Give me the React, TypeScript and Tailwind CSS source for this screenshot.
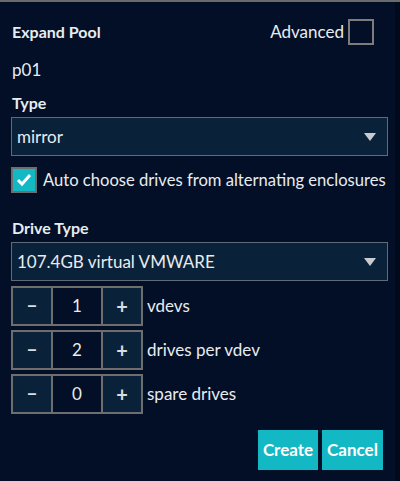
import React from "react";

const font = { fontFamily: 'Lato, "Noto Sans", sans-serif' };

function Select({ value }: { value: string }) {
  return (
    <div className="flex h-[39px] w-[377px] items-center justify-between border border-[#5f6b78] bg-[#0a2239] pl-[5px] pr-[10px] text-[17px] leading-[20px] text-[#e8ecef]">
      <span className="whitespace-nowrap">{value}</span>
      <svg width="14" height="10" viewBox="0 0 14 10">
        <polygon points="1,1 13,1 7,9" fill="#c8ccd0" />
      </svg>
    </div>
  );
}

function Stepper({ value, label }: { value: number; label: string }) {
  return (
    <div className="flex items-center">
      <div className="flex h-[40px] border-2 border-[#6e6e6e]">
        <div className="flex w-[38px] items-center justify-center bg-[#0a2239] text-[18px] font-bold leading-[20px] text-[#d8dde2]">−</div>
        <div className="flex w-[52px] items-center justify-center border-x-2 border-[#6e6e6e] bg-[#020f26] text-[17px] leading-[20px] text-[#e8ecef]">{value}</div>
        <div className="flex w-[38px] items-center justify-center bg-[#0a2239] text-[20px] font-bold leading-[20px] text-[#d8dde2]">+</div>
      </div>
      <span className="ml-[4px] whitespace-nowrap text-[17px] leading-[20px] text-[#e8ecef]">{label}</span>
    </div>
  );
}

export default function App() {
  return (
    <div className="flex h-[481px] w-[400px] overflow-hidden bg-[#010a1c] leading-[20px]" style={font}>
      <div className="flex w-[395px] shrink-0 flex-col border-t-2 border-[#6a6a6a] bg-[#020f26] px-[11px] text-[#e8ecef]">
        <div className="mt-[17px] flex h-[26px] items-center justify-between">
          <span className="ml-[1px] text-[16px] font-bold">Expand Pool</span>
          <div className="mr-[10px] flex items-center">
            <span className="text-[17px]">Advanced</span>
            <div className="ml-[4px] h-[26px] w-[26px] border-2 border-[#7c7c7c]" />
          </div>
        </div>
        <div className="ml-[1px] mt-[15px] text-[17px] leading-[20px]">p01</div>
        <div className="ml-[1px] mt-[13px] text-[16px] font-bold leading-[20px]">Type</div>
        <div className="mt-[4px]">
          <Select value="mirror" />
        </div>
        <div className="mt-[11px] flex h-[26px] items-center">
          <div className="flex h-[26px] w-[26px] shrink-0 items-center justify-center border-2 border-[#6e6e6e] bg-[#12b8c4]">
            <svg width="16" height="14" viewBox="0 0 16 14">
              <polyline points="2,7 6,11 14,2" fill="none" stroke="#ffffff" strokeWidth="3" />
            </svg>
          </div>
          <span className="ml-[6px] whitespace-nowrap text-[16.6px]">Auto choose drives from alternating enclosures</span>
        </div>
        <div className="ml-[1px] mt-[25px] text-[16px] font-bold leading-[20px]">Drive Type</div>
        <div className="mt-[4px]">
          <Select value="107.4GB virtual VMWARE" />
        </div>
        <div className="mt-[5px] flex flex-col gap-[4px]">
          <Stepper value={1} label="vdevs" />
          <Stepper value={2} label="drives per vdev" />
          <Stepper value={0} label="spare drives" />
        </div>
        <div className="mt-[16px] flex justify-end gap-[4px] pr-[1px]">
          <button className="h-[40px] w-[60px] bg-[#12b8c4] text-[17px] font-bold leading-[20px] text-white">Create</button>
          <button className="h-[40px] w-[61px] bg-[#12b8c4] text-[17px] font-bold leading-[20px] text-white">Cancel</button>
        </div>
      </div>
      <div className="flex-1 border-t-2 border-[#6a6a6a]" />
    </div>
  );
}
